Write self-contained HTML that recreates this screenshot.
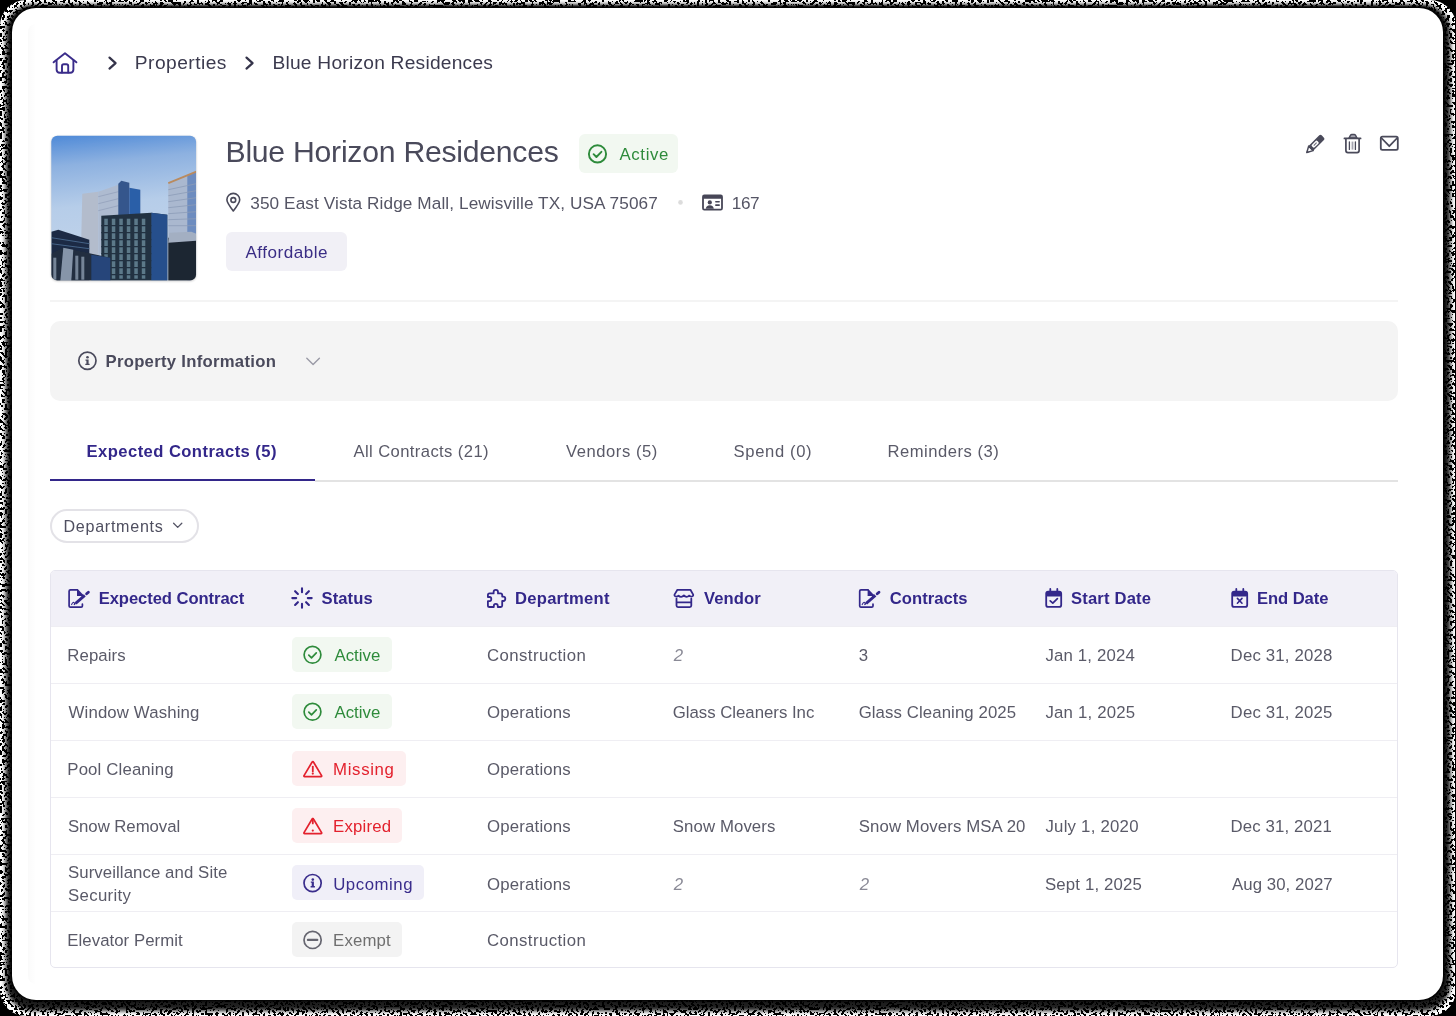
<!DOCTYPE html>
<html><head><meta charset="utf-8">
<style>
*{box-sizing:border-box;margin:0;padding:0}
html,body{width:1456px;height:1016px;overflow:hidden;background:#000}
body{font-family:"Liberation Sans",sans-serif;position:relative}
.halo{position:absolute;left:0;top:0;width:1456px;height:1016px;border-radius:34px;background:#8a8a8a}
.band{position:absolute;left:5px;top:4px;width:1448px;height:1007px;border-radius:26px;background:#111;filter:blur(1.5px)}
.card{position:absolute;left:12px;top:7.5px;width:1431px;height:992.5px;border-radius:24px;background:#fff}
.inner{position:absolute;left:28px;top:24px;width:8px;height:960px;border-radius:10px 0 0 10px;background:linear-gradient(90deg,rgba(0,0,0,0.018),rgba(0,0,0,0))}
.abs{position:absolute}
.t{position:absolute;white-space:nowrap;line-height:1}
svg.ic{position:absolute;left:0;top:0;width:1456px;height:1016px}
</style></head>
<body>
<svg class="bg" width="1456" height="1016" viewBox="0 0 1456 1016" style="position:absolute;left:0;top:0">
<defs>
 <filter id="nz" x="0" y="0" width="100%" height="100%" filterUnits="userSpaceOnUse">
  <feTurbulence type="fractalNoise" baseFrequency="0.38" numOctaves="1" seed="7" result="t"/>
  <feColorMatrix in="t" type="matrix" values="0 0 0 0 0  0 0 0 0 0  0 0 0 0 0  2.2 0 0 0 -0.53" result="a"/>
  <feComponentTransfer in="a" result="b"><feFuncA type="discrete" tableValues="0 1"/></feComponentTransfer>
  <feFlood flood-color="#fff" result="w"/>
  <feComposite in="w" in2="b" operator="in" result="c"/>
  <feComposite in="c" in2="SourceAlpha" operator="in"/>
 </filter>
 <filter id="bl2"><feGaussianBlur stdDeviation="2.2"/></filter>
 <filter id="bl1"><feGaussianBlur stdDeviation="0.8"/></filter>
</defs>
<rect x="0" y="0" width="1456" height="1016" fill="#000"/>
<rect x="0" y="0" width="1456" height="1016" rx="26" fill="#fff" filter="url(#nz)"/>
<rect x="5.5" y="4.5" width="1445" height="1006.5" rx="27" fill="#000" opacity="0.88" filter="url(#bl2)"/>
<rect x="1455" y="0" width="1" height="1016" fill="#000"/>
<rect x="10.3" y="6" width="1434.7" height="995.5" rx="25" fill="#000" filter="url(#bl1)"/>
</svg>
<div class="card"></div>
<div class="inner"></div>
<div style="position:absolute;left:0;top:0;width:1456px;height:1016px;will-change:transform">
<div class="t" style="left:134.82px;top:53.00px;font-size:19.2px;letter-spacing:0.461px;color:#3b3a4e;">Properties</div>
<div class="t" style="left:272.42px;top:53.00px;font-size:19.2px;letter-spacing:0.231px;color:#3b3a4e;">Blue Horizon Residences</div>
<div class="t" style="left:225.51px;top:137.00px;font-size:30.2px;letter-spacing:-0.256px;color:#4a4a5b;">Blue Horizon Residences</div>
<div class="abs" style="left:579px;top:134px;width:99px;height:39px;background:#f2f8f1;border-radius:6px;"></div>
<div class="t" style="left:619.46px;top:147.00px;font-size:16.8px;letter-spacing:0.644px;color:#2e8b3b;">Active</div>
<div class="t" style="left:250.25px;top:195.00px;font-size:17.2px;letter-spacing:0.100px;color:#555565;">350 East Vista Ridge Mall, Lewisville TX, USA 75067</div>
<div class="t" style="left:731.71px;top:195.00px;font-size:17.2px;letter-spacing:-0.366px;color:#555565;">167</div>
<div class="abs" style="left:226px;top:232px;width:121px;height:39px;background:#f1f0f6;border-radius:6px;"></div>
<div class="t" style="left:245.46px;top:244.00px;font-size:17.1px;letter-spacing:0.504px;color:#3a2d85;">Affordable</div>
<div class="abs" style="left:50px;top:300px;width:1348px;height:2px;background:#f4f4f4;border-radius:0px;"></div>
<div class="abs" style="left:50px;top:321px;width:1348px;height:80px;background:#f4f4f4;border-radius:10px;"></div>
<div class="t" style="left:105.47px;top:354.00px;font-size:16.7px;letter-spacing:0.282px;font-weight:bold;color:#4a4a5c;">Property Information</div>
<div class="t" style="left:86.58px;top:444.00px;font-size:16.6px;letter-spacing:0.435px;font-weight:bold;color:#33278a;">Expected Contracts (5)</div>
<div class="t" style="left:353.46px;top:444.00px;font-size:16.6px;letter-spacing:0.408px;color:#5a5a68;">All Contracts (21)</div>
<div class="t" style="left:565.92px;top:444.00px;font-size:16.6px;letter-spacing:0.570px;color:#5a5a68;">Vendors (5)</div>
<div class="t" style="left:733.55px;top:444.00px;font-size:16.6px;letter-spacing:0.651px;color:#5a5a68;">Spend (0)</div>
<div class="t" style="left:887.53px;top:444.00px;font-size:16.6px;letter-spacing:0.520px;color:#5a5a68;">Reminders (3)</div>
<div class="abs" style="left:315px;top:479.5px;width:1083px;height:2.0px;background:#e3e3e3;border-radius:0px;"></div>
<div class="abs" style="left:50px;top:479.3px;width:265px;height:2.1999999999999886px;background:#33278a;border-radius:0px;"></div>
<div class="abs" style="left:49.5px;top:509px;width:149.5px;height:34px;background:#fff;border-radius:17px;border:2px solid #e3e2e7;"></div>
<div class="t" style="left:63.47px;top:518.00px;font-size:16.1px;letter-spacing:0.722px;color:#4f4f60;">Departments</div>
<div class="abs" style="left:50px;top:570px;width:1348px;height:398px;background:#fff;border-radius:5px;border:1px solid #e6e5ee;"></div>
<div class="abs" style="left:51px;top:571px;width:1346px;height:55px;background:#f1f0f7;border-radius:0px;border-radius:4px 4px 0 0;"></div>
<div class="abs" style="left:51px;top:626px;width:1346px;height:1px;background:#efeef3;border-radius:0px;"></div>
<div class="abs" style="left:51px;top:683px;width:1346px;height:1px;background:#efeef3;border-radius:0px;"></div>
<div class="abs" style="left:51px;top:740px;width:1346px;height:1px;background:#efeef3;border-radius:0px;"></div>
<div class="abs" style="left:51px;top:797px;width:1346px;height:1px;background:#efeef3;border-radius:0px;"></div>
<div class="abs" style="left:51px;top:854px;width:1346px;height:1px;background:#efeef3;border-radius:0px;"></div>
<div class="abs" style="left:51px;top:911px;width:1346px;height:1px;background:#efeef3;border-radius:0px;"></div>
<div class="t" style="left:98.68px;top:591.00px;font-size:16.6px;letter-spacing:-0.065px;font-weight:bold;color:#33278a;">Expected Contract</div>
<div class="t" style="left:321.50px;top:591.00px;font-size:16.6px;letter-spacing:0.090px;font-weight:bold;color:#33278a;">Status</div>
<div class="t" style="left:515.08px;top:591.00px;font-size:16.6px;letter-spacing:0.241px;font-weight:bold;color:#33278a;">Department</div>
<div class="t" style="left:703.88px;top:591.00px;font-size:16.6px;letter-spacing:0.100px;font-weight:bold;color:#33278a;">Vendor</div>
<div class="t" style="left:889.84px;top:591.00px;font-size:16.6px;letter-spacing:0.018px;font-weight:bold;color:#33278a;">Contracts</div>
<div class="t" style="left:1071.00px;top:591.00px;font-size:16.6px;letter-spacing:0.183px;font-weight:bold;color:#33278a;">Start Date</div>
<div class="t" style="left:1256.88px;top:591.00px;font-size:16.6px;letter-spacing:-0.037px;font-weight:bold;color:#33278a;">End Date</div>
<div class="t" style="left:67.31px;top:648.00px;font-size:16.8px;letter-spacing:0.083px;color:#5a5a68;">Repairs</div>
<div class="abs" style="left:291.8px;top:637.0px;width:100.19999999999999px;height:34.5px;background:#f2f8f1;border-radius:5px;"></div>
<div class="t" style="left:334.46px;top:648.00px;font-size:16.8px;letter-spacing:0.044px;color:#2e8b3b;">Active</div>
<div class="t" style="left:487.06px;top:648.00px;font-size:16.8px;letter-spacing:0.413px;color:#5a5a68;">Construction</div>
<div class="t" style="left:673.68px;top:648.00px;font-size:16.8px;letter-spacing:0.000px;font-style:italic;color:#8a8a96;">2</div>
<div class="t" style="left:858.87px;top:648.00px;font-size:16.8px;letter-spacing:0.000px;color:#5a5a68;">3</div>
<div class="t" style="left:1045.45px;top:648.00px;font-size:16.8px;letter-spacing:0.173px;color:#5a5a68;">Jan 1, 2024</div>
<div class="t" style="left:1230.61px;top:648.00px;font-size:16.8px;letter-spacing:0.171px;color:#5a5a68;">Dec 31, 2028</div>
<div class="t" style="left:68.62px;top:705.00px;font-size:16.8px;letter-spacing:0.130px;color:#5a5a68;">Window Washing</div>
<div class="abs" style="left:291.8px;top:694.0px;width:100.19999999999999px;height:34.5px;background:#f2f8f1;border-radius:5px;"></div>
<div class="t" style="left:334.46px;top:705.00px;font-size:16.8px;letter-spacing:0.044px;color:#2e8b3b;">Active</div>
<div class="t" style="left:487.10px;top:705.00px;font-size:16.8px;letter-spacing:0.166px;color:#5a5a68;">Operations</div>
<div class="t" style="left:672.76px;top:705.00px;font-size:16.8px;letter-spacing:-0.013px;color:#5a5a68;">Glass Cleaners Inc</div>
<div class="t" style="left:858.66px;top:705.00px;font-size:16.8px;letter-spacing:0.093px;color:#5a5a68;">Glass Cleaning 2025</div>
<div class="t" style="left:1045.45px;top:705.00px;font-size:16.8px;letter-spacing:0.194px;color:#5a5a68;">Jan 1, 2025</div>
<div class="t" style="left:1230.61px;top:705.00px;font-size:16.8px;letter-spacing:0.167px;color:#5a5a68;">Dec 31, 2025</div>
<div class="t" style="left:67.31px;top:762.00px;font-size:16.8px;letter-spacing:0.146px;color:#5a5a68;">Pool Cleaning</div>
<div class="abs" style="left:291.8px;top:751.0px;width:114.19999999999999px;height:34.5px;background:#fdeff0;border-radius:5px;"></div>
<div class="t" style="left:333.11px;top:762.00px;font-size:16.8px;letter-spacing:0.654px;color:#e3212d;">Missing</div>
<div class="t" style="left:487.10px;top:762.00px;font-size:16.8px;letter-spacing:0.166px;color:#5a5a68;">Operations</div>
<div class="t" style="left:67.94px;top:819.00px;font-size:16.8px;letter-spacing:-0.054px;color:#5a5a68;">Snow Removal</div>
<div class="abs" style="left:291.8px;top:808.0px;width:110.69999999999999px;height:34.5px;background:#fdeff0;border-radius:5px;"></div>
<div class="t" style="left:333.11px;top:819.00px;font-size:16.8px;letter-spacing:0.197px;color:#e3212d;">Expired</div>
<div class="t" style="left:487.10px;top:819.00px;font-size:16.8px;letter-spacing:0.166px;color:#5a5a68;">Operations</div>
<div class="t" style="left:672.84px;top:819.00px;font-size:16.8px;letter-spacing:0.088px;color:#5a5a68;">Snow Movers</div>
<div class="t" style="left:858.74px;top:819.00px;font-size:16.8px;letter-spacing:0.095px;color:#5a5a68;">Snow Movers MSA 20</div>
<div class="t" style="left:1045.45px;top:819.00px;font-size:16.8px;letter-spacing:0.235px;color:#5a5a68;">July 1, 2020</div>
<div class="t" style="left:1230.61px;top:819.00px;font-size:16.8px;letter-spacing:0.124px;color:#5a5a68;">Dec 31, 2021</div>
<div class="abs" style="left:291.8px;top:865.0px;width:132.2px;height:34.5px;background:#f0eff8;border-radius:5px;"></div>
<div class="t" style="left:333.20px;top:877.00px;font-size:16.8px;letter-spacing:0.550px;color:#3a2d8c;">Upcoming</div>
<div class="t" style="left:487.10px;top:877.00px;font-size:16.8px;letter-spacing:0.166px;color:#5a5a68;">Operations</div>
<div class="t" style="left:673.68px;top:877.00px;font-size:16.8px;letter-spacing:0.000px;font-style:italic;color:#8a8a96;">2</div>
<div class="t" style="left:859.78px;top:877.00px;font-size:16.8px;letter-spacing:0.000px;font-style:italic;color:#8a8a96;">2</div>
<div class="t" style="left:1044.94px;top:877.00px;font-size:16.8px;letter-spacing:0.161px;color:#5a5a68;">Sept 1, 2025</div>
<div class="t" style="left:1231.96px;top:877.00px;font-size:16.8px;letter-spacing:0.075px;color:#5a5a68;">Aug 30, 2027</div>
<div class="t" style="left:67.31px;top:933.00px;font-size:16.8px;letter-spacing:0.049px;color:#5a5a68;">Elevator Permit</div>
<div class="abs" style="left:291.8px;top:922.0px;width:110.69999999999999px;height:34.5px;background:#f3f3f3;border-radius:5px;"></div>
<div class="t" style="left:333.11px;top:933.00px;font-size:16.8px;letter-spacing:0.152px;color:#6f6f6f;">Exempt</div>
<div class="t" style="left:487.06px;top:933.00px;font-size:16.8px;letter-spacing:0.413px;color:#5a5a68;">Construction</div>
<div class="t" style="left:67.94px;top:865.00px;font-size:16.8px;letter-spacing:0.084px;color:#5a5a68;">Surveillance and Site</div>
<div class="t" style="left:67.94px;top:888.00px;font-size:16.8px;letter-spacing:0.344px;color:#5a5a68;">Security</div>
</div>
<svg class="ic" viewBox="0 0 1456 1016">
<defs>
 <linearGradient id="sky" x1="0" y1="0" x2="0.1" y2="1">
  <stop offset="0" stop-color="#4a87d7"/>
  <stop offset="0.22" stop-color="#8db1e0"/>
  <stop offset="0.5" stop-color="#b6cde9"/>
  <stop offset="1" stop-color="#c6d6ea"/>
 </linearGradient>
 <clipPath id="photoclip"><rect x="0" y="0" width="144.8" height="144.7" rx="6"/></clipPath>
 <filter id="pblur" x="-5%" y="-5%" width="110%" height="110%"><feGaussianBlur stdDeviation="0.55"/></filter>
 <filter id="psh" x="-10%" y="-10%" width="120%" height="120%"><feGaussianBlur stdDeviation="1"/></filter>
</defs>
<!-- home -->
<g fill="none" stroke="#3a2c8a" stroke-width="1.9" stroke-linecap="round" stroke-linejoin="round">
 <path d="M53.6 62.3 L65 53.2 L76.4 62.3"/>
 <path d="M56.6 60.3 V69.6 Q56.6 72.8 59.8 72.8 H70.2 Q73.4 72.8 73.4 69.6 V60.3"/>
 <path d="M62 72.6 V66 Q62 64.2 63.8 64.2 H66.4 Q68.2 64.2 68.2 66 V72.6"/>
</g>
<!-- chevrons -->
<g fill="none" stroke="#35344a" stroke-width="2.2" stroke-linecap="round" stroke-linejoin="round">
 <path d="M109.5 57.6 L115.6 63.1 L109.5 68.6"/>
 <path d="M246.5 57.6 L252.6 63.1 L246.5 68.6"/>
</g>
<!-- photo -->
<rect x="51.3" y="136.5" width="144.8" height="144.7" rx="6" fill="#000" opacity="0.22" filter="url(#psh)"/>
<g clip-path="url(#photoclip)" transform="translate(51.3,135.7)">
<g filter="url(#pblur)">
 <rect x="-2" y="-2" width="150" height="150" fill="url(#sky)"/>
 <!-- right tall building -->
 <polygon points="117,47 145,36 145,145 117,145" fill="#aab8cf"/>
 <polygon points="136,40 145,36 145,145 136,145" fill="#6d8cbf"/>
 <polyline points="117,47.5 145,36" stroke="#b98a5e" stroke-width="1.8" fill="none"/>
 <g stroke="#8c9cb8" stroke-width="0.8">
  <line x1="117" y1="54" x2="145" y2="48"/><line x1="117" y1="60" x2="145" y2="55"/><line x1="117" y1="66" x2="145" y2="62"/><line x1="117" y1="72" x2="145" y2="69"/><line x1="117" y1="78" x2="145" y2="76"/><line x1="117" y1="84" x2="145" y2="83"/><line x1="117" y1="90" x2="145" y2="90"/>
 </g>
 <!-- silver tower -->
 <polygon points="31,58 47,56 47,145 29,145" fill="#b3bccc"/>
 <polygon points="47,56 67,49 70,45 78,47 78,52 89,54 89,82 47,120" fill="#aebbd0"/>
 <g stroke="#96a4bd" stroke-width="0.9"><line x1="47" y1="61" x2="67" y2="56"/><line x1="47" y1="68" x2="67" y2="63"/><line x1="47" y1="75" x2="67" y2="70"/></g>
 <polygon points="67,48 70,45 78,47 78,120 67,120" fill="#35568c"/>
 <polygon points="78,52 89,54 89,82 78,82" fill="#2c5ea8"/>
 <!-- right lower dark building -->
 <polygon points="117,102 145,100 145,145 117,145" fill="#1d2533"/>
 <polygon points="118,97 140,96 145,98 145,105 117,107" fill="#a3afc2"/>
 <!-- front center building -->
 <polygon points="50,80 100,77 116,79 116,145 50,145" fill="#223242"/>
 <polygon points="100,77 116,79 116,145 100,145" fill="#28508c"/>
 <g fill="#7498a8" opacity="0.7">
  <rect x="53" y="83" width="3.5" height="60"/><rect x="60.5" y="83" width="3.5" height="60"/><rect x="68" y="83" width="3.5" height="60"/><rect x="75.5" y="83" width="3.5" height="60"/><rect x="83" y="83" width="3.5" height="60"/><rect x="90.5" y="83" width="3.5" height="60"/>
 </g>
 <g stroke="#223243" stroke-width="1.3"><line x1="50" y1="90" x2="100" y2="90"/><line x1="50" y1="97" x2="100" y2="97"/><line x1="50" y1="104" x2="100" y2="104"/><line x1="50" y1="111" x2="100" y2="111"/><line x1="50" y1="118" x2="100" y2="118"/><line x1="50" y1="125" x2="100" y2="125"/><line x1="50" y1="132" x2="100" y2="132"/><line x1="50" y1="139" x2="100" y2="139"/></g>
 <!-- left building -->
 <polygon points="0,96 7,94 38,104 38,145 0,145" fill="#1c2b44"/>
 <g stroke="#456287" stroke-width="1"><line x1="0" y1="102" x2="38" y2="108"/><line x1="0" y1="108" x2="38" y2="113"/></g>
 <!-- bottom-left building -->
 <polygon points="0,118 12,112 22,114 59,122 59,145 0,145" fill="#222e40"/>
 <polygon points="12,112 22,114 20,145 9,145" fill="#8695a9"/>
 <polygon points="40,119 59,122 59,145 40,145" fill="#26457a"/>
 <g fill="#97a9bd" opacity="0.7"><rect x="24" y="120" width="3" height="24"/><rect x="30" y="121" width="3" height="23"/><rect x="2" y="122" width="3" height="22"/></g>
</g>
</g>
<!-- title active check -->
<g fill="none" stroke="#2e8b3b" stroke-width="1.9" stroke-linecap="round" stroke-linejoin="round">
 <circle cx="597.5" cy="153.9" r="8.6"/>
 <path d="M593.6 154.2 L596.4 157 L601.4 151.8"/>
</g>
<!-- pin -->
<g fill="none" stroke="#4a4a5a" stroke-width="1.6" stroke-linejoin="round">
 <path d="M233.3 211 C229 205.5 226.9 202.5 226.9 199.8 A6.4 6.4 0 0 1 239.7 199.8 C239.7 202.5 237.6 205.5 233.3 211 Z"/>
 <circle cx="233.3" cy="200" r="2.4"/>
</g>
<!-- dot -->
<circle cx="680.5" cy="202.4" r="2.3" fill="#dcdcdc"/>
<!-- id card -->
<g fill="#474657">
 <path d="M704.3 194.6 H720.7 Q722.9 194.6 722.9 196.8 V208.3 Q722.9 210.5 720.7 210.5 H704.3 Q702.1 210.5 702.1 208.3 V196.8 Q702.1 194.6 704.3 194.6 Z M703.9 198.8 V208.7 H721.1 V198.8 Z" fill-rule="evenodd"/>
 <circle cx="709.8" cy="202.4" r="2.1"/>
 <path d="M705.8 208.8 Q706.2 205.3 709.8 205.3 Q713.4 205.3 713.8 208.8 Z"/>
 <rect x="715.1" y="201" width="4.8" height="1.4" rx="0.7"/>
 <rect x="715.1" y="204.3" width="4.8" height="1.6" rx="0.7"/>
</g>
<!-- pencil -->
<g transform="translate(1306.4,152.9) rotate(-45)">
 <path d="M0.6 0 L6.4 -3.2 V3.2 Z" fill="none" stroke="#4a4a5a" stroke-width="1.5" stroke-linejoin="round"/>
 <path d="M0 0 L2.4 -1.5 V1.5 Z" fill="#4a4a5a"/>
 <path d="M6 -3.3 H21.5 Q23.2 -3.3 23.2 -1.6 V1.6 Q23.2 3.3 21.5 3.3 H6 Z" fill="#4a4a5a"/>
 <rect x="8.6" y="-1.9" width="7.6" height="3.8" rx="1.2" fill="#fff"/>
 <rect x="10.4" y="-0.55" width="4" height="1.1" fill="#6a6a78"/>
</g>
<!-- trash -->
<path d="M1349 138 L1350.6 135.2 Q1351 134.6 1351.8 134.6 H1354.2 Q1355 134.6 1355.4 135.2 L1357 138 Z" fill="#a5a5b0" stroke="#4a4a5a" stroke-width="1.5" stroke-linejoin="round"/>
<g fill="none" stroke="#4a4a5a" stroke-width="1.7" stroke-linecap="round" stroke-linejoin="round">
 <path d="M1344.4 138.4 H1360.6"/>
 <path d="M1345.9 139 V150.6 Q1345.9 152.6 1347.9 152.6 H1357.1 Q1359.1 152.6 1359.1 150.6 V139"/>
 <path d="M1349.4 141.8 V149.4 M1355.4 141.8 V149.4" stroke-width="1.3"/>
</g>
<path d="M1352.5 141.6 V149.6" stroke="#a5a5b0" stroke-width="1.8"/>
<!-- mail -->
<g fill="none" stroke="#4a4a5a" stroke-width="1.8" stroke-linecap="round" stroke-linejoin="round">
 <rect x="1380.8" y="136.6" width="17" height="13.3" rx="1.6"/>
 <path d="M1381.4 138 L1389.3 146.2 L1397.2 138"/>
</g>
<!-- property info icon -->
<g stroke="#4a4a5c" fill="none" stroke-width="1.7">
 <circle cx="87.4" cy="360.7" r="8.6"/>
</g>
<g fill="#4a4a5c">
 <circle cx="87.5" cy="357.2" r="1.3"/>
 <path d="M85.5 359.4 H88.6 V363.7 H89.6 V365 H85.3 V363.7 H86.4 V360.7 H85.5 Z"/>
</g>
<!-- chevron down property -->
<path d="M306.8 358.2 L313.1 364.5 L319.4 358.2" fill="none" stroke="#9a9aa6" stroke-width="1.4" stroke-linecap="round" stroke-linejoin="round"/>
<!-- departments chevron -->
<path d="M173.6 523.3 L177.7 527.4 L181.8 523.3" fill="none" stroke="#555566" stroke-width="1.3" stroke-linecap="round" stroke-linejoin="round"/>

<!-- header icons -->
<g fill="none" stroke="#33278a" stroke-width="1.8" stroke-linecap="round" stroke-linejoin="round">
 <!-- spinner -->
 <path d="M302 588.4 V592.3 M302 603.9 V607.8 M292.3 598.1 H296.2 M307.8 598.1 H311.7 M295.1 591.2 L297.9 594 M306.1 602.2 L308.9 605 M295.1 605 L297.9 602.2 M306.1 594 L308.9 591.2" stroke-width="2.1"/>
 <!-- puzzle -->
 <path d="M491 593.4 H493.6 V592.2 Q493.6 589.9 495.8 589.9 Q498 589.9 498 592.2 V593.4 H500.5 Q502.2 593.4 502.2 595.1 V596.6 H503.2 Q505.3 596.6 505.3 598.8 Q505.3 601 503.2 601 H502.2 V605.6 Q502.2 607 500.8 607 H497.8 V606.2 Q497.8 603.9 495.8 603.9 Q493.8 603.9 493.8 606.2 V607 H489.5 Q487.9 607 487.9 605.4 V601.2 H489.6 Q491.3 601.2 491.3 599.1 Q491.3 597 489.6 597 H487.9 V595 Q487.9 593.4 489.5 593.4 Z"/>
 <!-- store -->
 <path d="M677.4 589.8 H690.4 L693.2 594.6 Q693.4 596.4 691.5 596.6 Q689.9 596.6 689.2 595.6 Q688 596.8 686.6 596.8 Q685 596.8 683.9 595.4 Q682.6 596.8 681.2 596.8 Q679.6 596.8 678.6 595.6 Q677.6 596.6 676.2 596.6 Q674.3 596.4 674.5 594.6 Z"/>
 <path d="M676.5 598.6 V605.6 Q676.5 607.1 678 607.1 H689.8 Q691.3 607.1 691.3 605.6 V598.6 M676.5 602.4 H691.3"/>
 <!-- calendars -->
 <rect x="1046.2" y="591.6" width="15" height="15.3" rx="2"/>
 <path d="M1050.3 589 V592.5 M1057.3 589 V592.5"/>
 <path d="M1050.2 600.8 L1052.8 603.2 L1057.4 598.6" stroke-width="1.7"/>
 <rect x="1232.2" y="591.6" width="15" height="15.3" rx="2"/>
 <path d="M1236.3 589 V592.5 M1243.3 589 V592.5"/>
 <path d="M1237.4 598.4 L1242 603.2 M1242 598.4 L1237.4 603.2" stroke-width="1.6"/>
</g>
<g fill="#33278a">
 <!-- calendar top bands -->
 <rect x="1046.2" y="591.6" width="15" height="4.8" rx="1.5"/>
 <rect x="1232.2" y="591.6" width="15" height="4.8" rx="1.5"/>
</g>
<!-- contract icons -->
<g id="ctr">
 <g fill="none" stroke="#33278a" stroke-width="1.7" stroke-linecap="round" stroke-linejoin="round">
  <path d="M77.6 589.9 H70.4 Q69.1 589.9 69.1 591.2 V605.9 Q69.1 607.2 70.4 607.2 H81.1 Q82.4 607.2 82.4 605.9 V604.2"/>
  <path d="M82.4 595 V597.2"/>
  <path d="M71.6 604.6 Q72.6 602.4 73.6 602.2 Q74.3 602.4 74.6 603.8 Q75.2 602.6 76.2 603.2" stroke-width="1.1"/>
 </g>
 <path d="M77 589.9 H78.6 L82.9 594.6 V596 H77 Z" fill="#33278a"/>
 <path d="M75.6 603.4 L84.8 595.4" stroke="#33278a" stroke-width="2.8" stroke-linecap="butt"/>
 <path d="M73.8 604.9 L75.4 603.6" stroke="#33278a" stroke-width="1.2"/>
 <path d="M86.6 593.8 L88.4 592.2" stroke="#33278a" stroke-width="2.8" stroke-linecap="round"/>
</g>
<use href="#ctr" transform="translate(790.6,0)"/>
<!-- badge icons -->
<g fill="none" stroke-width="1.7" stroke-linecap="round" stroke-linejoin="round">
 <g stroke="#2e8b3b">
  <circle cx="312.5" cy="654.8" r="8.4"/><path d="M308.8 655.1 L311.5 657.8 L316.3 652.9"/>
  <circle cx="312.5" cy="711.8" r="8.4"/><path d="M308.8 712.1 L311.5 714.8 L316.3 709.9"/>
 </g>
 <g stroke="#e3212d">
  <path d="M312.9 761.6 Q313.3 761.6 313.6 762.2 L321.6 775.6 Q322 776.6 321 776.6 H304.6 Q303.6 776.6 304 775.6 L312 762.2 Q312.4 761.6 312.9 761.6 Z"/>
  <path d="M312.8 766.6 V771.4" stroke-width="1.8"/>
  <path d="M312.8 818.6 V823.4" stroke-width="1.8"/>
  <path d="M312.9 818.6 Q313.3 818.6 313.6 819.2 L321.6 832.6 Q322 833.6 321 833.6 H304.6 Q303.6 833.6 304 832.6 L312 819.2 Q312.4 818.6 312.9 818.6 Z"/>
 </g>
 <g stroke="#3a2d8c"><circle cx="312.6" cy="883.1" r="8.6"/></g>
 <g stroke="#666670"><circle cx="312.6" cy="939.9" r="8.6"/><path d="M307.9 939.9 H317.3" stroke-width="2.2"/></g>
</g>
<g fill="#e3212d"><circle cx="312.8" cy="773.6" r="1.1"/><circle cx="312.8" cy="830.6" r="1.1"/></g>
<g fill="#3a2d8c">
 <circle cx="312.8" cy="879.6" r="1.3"/>
 <path d="M310.8 881.4 H313.9 V886 H314.9 V887.4 H310.6 V886 H311.7 V882.8 H310.8 Z"/>
</g>
</svg>

</body></html>
